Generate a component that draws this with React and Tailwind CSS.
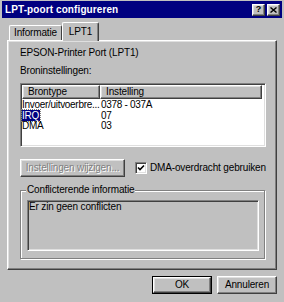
export default function App() {
  const raised =
    'border border-t-white border-l-white border-b-[#404040] border-r-[#404040] shadow-[inset_-1px_-1px_0_#808080,inset_1px_1px_0_#dfdfdf]'
  const sunken =
    'border border-t-[#808080] border-l-[#808080] border-b-white border-r-white shadow-[inset_1px_1px_0_#404040,inset_-1px_-1px_0_#dfdfdf]'

  return (
    <div
      className="w-[284px] h-[302px] bg-[#c0c0c0] flex flex-col px-[2px] pt-[1px] text-black text-[10px] tracking-[-0.15px] overflow-hidden whitespace-nowrap"
      style={{ fontFamily: '"Liberation Sans", Arial, sans-serif' }}
    >
      {/* Title bar */}
      <div className="h-[17px] bg-[#000080] flex items-center justify-between pl-[3px] pr-[2px]">
        <span className="text-white font-bold text-[10px] tracking-[0.1px] leading-none">LPT-poort configureren</span>
        <div className="flex gap-[2px]">
          <div className={`w-[13px] h-[12px] bg-[#c0c0c0] ${raised} flex items-center justify-center text-[9px] font-bold leading-none`}>?</div>
          <div className={`w-[13px] h-[12px] bg-[#c0c0c0] ${raised} flex items-center justify-center`}>
            <svg width="7" height="6" viewBox="0 0 7 6">
              <path d="M0.5 0.5 L6.5 5.5 M6.5 0.5 L0.5 5.5" stroke="black" strokeWidth="1.4" />
            </svg>
          </div>
        </div>
      </div>

      <div className="flex flex-col px-[5px]">
        {/* Tabs */}
        <div className="flex items-end h-[18px] mt-[4px] pl-[2px]">
          <div className="h-[15px] w-[53px] border-t border-l border-t-white border-l-white border-r border-r-[#404040] rounded-t-[2px] flex items-center justify-center leading-none">
            Informatie
          </div>
          <div className="relative z-10 -mb-[1px] h-[19px] w-[37px] bg-[#c0c0c0] border-t border-l border-t-white border-l-white border-r border-r-[#404040] shadow-[inset_-1px_0_0_#808080] rounded-t-[2px] flex items-center justify-center leading-none pb-[1px]">
            LPT1
          </div>
        </div>

        {/* Panel */}
        <div className={`h-[230px] ${raised} flex flex-col pl-[12px] pr-[10px] pt-[6px]`}>
          <div className="leading-[12px]">EPSON-Printer Port (LPT1)</div>
          <div className="leading-[12px] mt-[6px]">Broninstellingen:</div>

          {/* List */}
          <div className={`mt-[6px] h-[64px] w-[246px] bg-white ${sunken} p-[1px] flex flex-col`}>
            <div className="flex h-[14px] shrink-0">
              <div className={`w-[78px] bg-[#c0c0c0] ${raised} pl-[5px] leading-[12px]`}>Brontype</div>
              <div className={`flex-1 bg-[#c0c0c0] ${raised} pl-[5px] leading-[12px]`}>Instelling</div>
              <div className="w-[2px]" />
            </div>
            <div className="flex flex-col mt-[1px] tracking-[-0.3px]">
              <div className="flex h-[10.5px] leading-[10.5px]">
                <span className="w-[79px]">Invoer/uitvoerbre...</span>
                <span>0378 - 037A</span>
              </div>
              <div className="flex h-[10.5px] leading-[10.5px]">
                <span className="w-[79px]">
                  <span className="bg-[#000080] text-white outline-1 outline-dotted outline-[#808080] pr-[1px]">IRQ</span>
                </span>
                <span>07</span>
              </div>
              <div className="flex h-[10.5px] leading-[10.5px]">
                <span className="w-[79px]">DMA</span>
                <span>03</span>
              </div>
            </div>
          </div>

          {/* Button + checkbox */}
          <div className="flex items-center mt-[12px] h-[18px]">
            <div className={`w-[105px] h-[18px] shrink-0 ${raised} flex items-center justify-center text-[#808080] [text-shadow:1px_1px_0_white] leading-none`}>
              Instellingen wijzigen...
            </div>
            <div className={`ml-[10px] w-[12px] h-[12px] shrink-0 bg-white ${sunken} flex items-center justify-center`}>
              <svg width="8" height="8" viewBox="0 0 8 8">
                <path d="M1 3.5 L3 5.5 L7 1.5" stroke="black" strokeWidth="1.6" fill="none" />
              </svg>
            </div>
            <span className="ml-[3px] leading-none shrink-0">DMA-overdracht gebruiken</span>
          </div>

          {/* Group box */}
          <div className="relative mt-[13px] w-[245px] h-[69px] border border-[#808080] shadow-[1px_1px_0_white,inset_1px_1px_0_white] pl-[6px] pr-[5px] pt-[9px] pb-[7px]">
            <span className="absolute -top-[7px] left-[5px] bg-[#c0c0c0] px-[1px] leading-[12px]">Conflicterende informatie</span>
            <div className={`h-full ${sunken} bg-[#c0c0c0] pl-[1px] leading-[12px]`}>Er zin geen conflicten</div>
          </div>
        </div>

        {/* Bottom buttons */}
        <div className="flex justify-end gap-[5px] mt-[6px]">
          <div className="w-[60px] h-[18px] border border-black">
            <div className={`h-full ${raised} flex items-center justify-center leading-none`}>OK</div>
          </div>
          <div className={`w-[60px] h-[18px] ${raised} flex items-center justify-center leading-none`}>Annuleren</div>
        </div>
      </div>
    </div>
  )
}
